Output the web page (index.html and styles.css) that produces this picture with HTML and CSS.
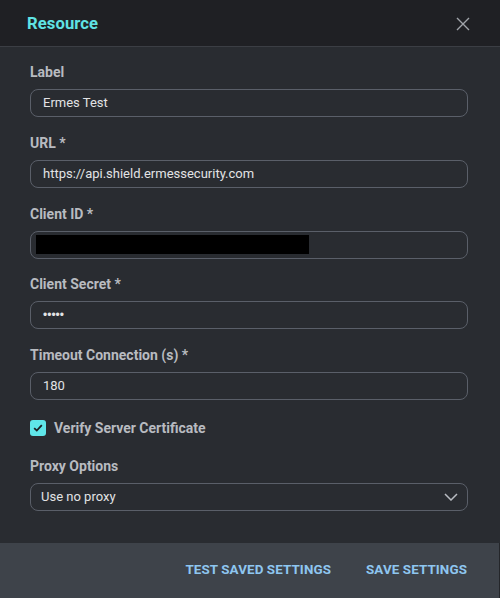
FILE: index.html
```html
<!DOCTYPE html>
<html>
<head>
<meta charset="utf-8">
<link rel="stylesheet" href="styles.css">
</head>
<body>
<div class="dialog">
  <header class="head">
    <h1 class="title">Resource</h1>
    <svg class="close" width="14" height="14" viewBox="0 0 14 14"><path d="M1 1L13 13M13 1L1 13" stroke="#a0a4aa" stroke-width="1.4" fill="none"/></svg>
  </header>
  <main class="body">
    <div class="field">
      <label class="lbl">Label</label>
      <div class="input">Ermes Test</div>
    </div>
    <div class="field">
      <label class="lbl">URL *</label>
      <div class="input">https://api.shield.ermessecurity.com</div>
    </div>
    <div class="field">
      <label class="lbl">Client ID *</label>
      <div class="input redacted-wrap"><span class="redacted"></span></div>
    </div>
    <div class="field">
      <label class="lbl">Client Secret *</label>
      <div class="input dots">•••••</div>
    </div>
    <div class="field">
      <label class="lbl">Timeout Connection (s) *</label>
      <div class="input">180</div>
    </div>
    <div class="check-row">
      <span class="box"><svg width="10" height="8" viewBox="0 0 10 8"><path d="M1.2 4.2L3.8 6.6L8.8 1.2" stroke="#1c1e22" stroke-width="1.8" fill="none"/></svg></span>
      <span class="check-label">Verify Server Certificate</span>
    </div>
    <div class="field last">
      <label class="lbl">Proxy Options</label>
      <div class="input select">Use no proxy
        <svg class="chev" width="14" height="8" viewBox="0 0 14 8"><path d="M1 1L7 7L13 1" stroke="#b8bcc2" stroke-width="1.5" fill="none"/></svg>
      </div>
    </div>
  </main>
  <footer class="foot">
    <button class="btn">TEST SAVED SETTINGS</button>
    <button class="btn">SAVE SETTINGS</button>
  </footer>
</div>
</body>
</html>
```
FILE: styles.css
```css
* { box-sizing: border-box; }
html, body { margin: 0; padding: 0; }
body { background: #292c31; font-family: Roboto, "Liberation Sans", sans-serif; }
.dialog { width: 500px; height: 598px; display: flex; flex-direction: column; background: #292c31; }
.head { height: 47px; background: #1f2024; border-bottom: 1px solid #3b3e44; display: flex; align-items: center; justify-content: space-between; padding: 0 30px 0 27px; }
.title { margin: 0; font-size: 16.6px; font-weight: 700; color: #5fe3e4; letter-spacing: 0.1px; }
.close { display: block; margin-top: 2px; }
.body { flex: 1; padding: 15px 32px 0 30px; }
.field { margin-bottom: 15.75px; }
.lbl { display: block; font-size: 14px; line-height: 20px; font-weight: 700; color: #b8bbc0; margin-bottom: 7px; }
.input { height: 28px; border: 1px solid #5a5f69; border-radius: 8px; padding: 0 12px; font-size: 13px; line-height: 26px; color: #e2e3e5; display: flex; align-items: center; }
.redacted-wrap { padding: 0 5px; }
.redacted { display: block; width: 273px; height: 19px; background: #000; }
.dots { font-family: "Liberation Sans", sans-serif; font-size: 12px; padding-left: 12px; }
.check-row { height: 24px; display: flex; align-items: center; margin-bottom: 15.75px; }
.box { width: 16px; height: 16px; background: #5fe6e9; border-radius: 3px; display: flex; align-items: center; justify-content: center; margin-right: 8px; }
.box svg { display: block; }
.check-label { font-size: 14px; font-weight: 700; color: #b8bbc0; }
.select { justify-content: space-between; padding-left: 10px; padding-right: 9px; }
.chev { display: block; }
.foot { height: 55px; background: #3e434a; display: flex; align-items: center; justify-content: flex-end; padding: 0 32px 2px 0; gap: 35px; border-right: 1px solid #24262a; }
.btn { background: none; border: 0; padding: 0; font-family: Roboto, "Liberation Sans", sans-serif; font-size: 13.4px; font-weight: 700; color: #8ec6f0; letter-spacing: 0.1px; }
```
